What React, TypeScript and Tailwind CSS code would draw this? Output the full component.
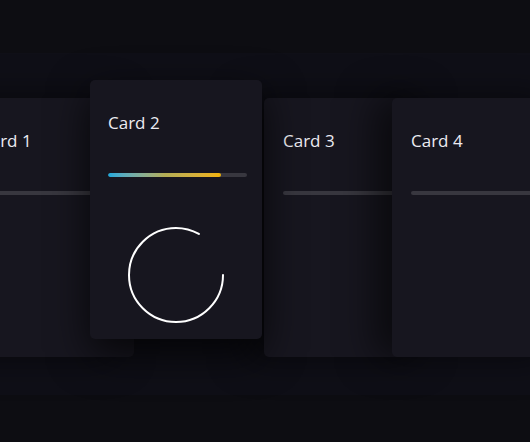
import React from 'react'

const font = { fontFamily: '"Open Sans", "Noto Sans", sans-serif' }

function Bar({ progress }: { progress?: number }) {
  return (
    <div className="mt-[38px] w-[139px] h-[4px] rounded-full bg-[#38373f] overflow-hidden">
      {progress !== undefined && (
        <div
          className="h-full rounded-full bg-gradient-to-r from-[#17a8dc] via-[#b3ad55] to-[#f2b200]"
          style={{ width: `${progress}%` }}
        />
      )}
    </div>
  )
}

function Card({
  title,
  active = false,
  className = '',
  children,
}: {
  title: string
  active?: boolean
  className?: string
  children?: React.ReactNode
}) {
  return (
    <div
      className={`relative shrink-0 w-[172px] h-[259px] rounded-[5px] bg-[#17161f] pl-[18px] pt-[31px] ${
        active ? 'z-20 shadow-[0_14px_40px_rgba(0,0,0,0.75)]' : 'mt-[18px] z-10 shadow-[-18px_0_36px_rgba(0,0,0,0.55)]'
      } ${className}`}
    >
      <div className="text-[17px] leading-[24px] text-[#ecebf2]" style={font}>
        {title}
      </div>
      {children}
    </div>
  )
}

export default function App() {
  return (
    <div className="w-[530px] h-[442px] overflow-hidden bg-[#0d0d12]">
      <div className="mt-[53px] h-[342px] bg-[#0f0f17] pt-[27px]">
        <div className="flex items-start ml-[-38px]">
          <Card title="Card 1">
            <Bar />
          </Card>
          <Card title="Card 2" active className="ml-[-44px]">
            <Bar progress={81} />
            <div className="mt-[50px] pr-[18px] flex justify-center">
              <svg width="96" height="96" viewBox="0 0 96 96">
                <circle
                  cx="48"
                  cy="48"
                  r="47"
                  fill="none"
                  stroke="#ffffff"
                  strokeWidth="2"
                  strokeLinecap="round"
                  strokeDasharray="245 400"
                />
              </svg>
            </div>
          </Card>
          <Card title="Card 3" className="ml-[2px] pl-[19px]">
            <Bar />
          </Card>
          <Card title="Card 4" className="ml-[-44px] pl-[19px]">
            <Bar />
          </Card>
        </div>
      </div>
    </div>
  )
}
